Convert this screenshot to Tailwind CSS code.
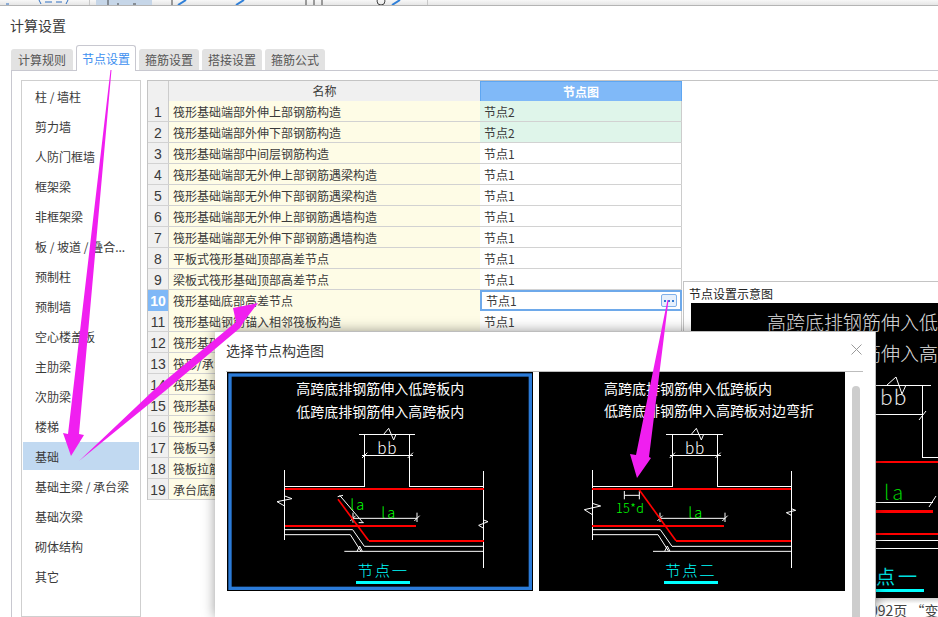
<!DOCTYPE html>
<html lang="zh">
<head>
<meta charset="utf-8">
<script src="https://cdn.jsdelivr.net/npm/@tailwindcss/browser@4"></script>
</head>
<body class="m-0 bg-white">
<div class="relative w-[938px] h-[617px] overflow-hidden bg-white text-[12px] text-[#3a3a3a] font-['Noto_Sans_CJK_SC','Liberation_Sans',sans-serif]">

  <!-- top toolbar remainder -->
  <div class="h-[6px] bg-gradient-to-b from-[#f7f7f7] to-[#e6e6e6] border-b border-[#b4b4b4] overflow-hidden">
    <svg width="938" height="5" viewBox="0 0 938 5" class="block">
      <rect x="96" y="0" width="56" height="5" fill="#c6d6e8"/>
      <path d="M89.5 0V5M427.5 0V5" stroke="#c8c8c8"/>
      <path d="M6 4H9M39 0L41 4M66 4L68 0M45 2H52M56 2H62" stroke="#2f6fc0" fill="none"/>
      <path d="M108 0V5M117 4H119M133 4H136M172 0V5M306 0V5M314 0V5M322 0V5" stroke="#444" fill="none"/>
      <path d="M178 5L186 0M236 5L244 0M392 5L400 0" stroke="#2f7fd8" stroke-width="2" fill="none"/>
      <circle cx="381" cy="1" r="4" fill="none" stroke="#444"/>
    </svg>
  </div>

  <div class="h-[39px] pl-[10px] pt-[9px] text-[14px] leading-[20px]">计算设置</div>

  <!-- tabs -->
  <div class="h-[25px] ml-[11px] flex items-end gap-[3px]">
    <div class="w-[62px] h-[21px] bg-[#e2e2e2] rounded-t-[3px] flex items-center justify-center text-[#555]">计算规则</div>
    <div class="w-[60px] h-[26px] -mb-px bg-white border border-b-0 border-[#c8c8d0] rounded-t-[3px] flex items-center justify-center text-[#3d8ff0] z-10">节点设置</div>
    <div class="w-[60px] h-[21px] bg-[#e2e2e2] rounded-t-[3px] flex items-center justify-center text-[#555]">箍筋设置</div>
    <div class="w-[60px] h-[21px] bg-[#e2e2e2] rounded-t-[3px] flex items-center justify-center text-[#555]">搭接设置</div>
    <div class="w-[60px] h-[21px] bg-[#e2e2e2] rounded-t-[3px] flex items-center justify-center text-[#555]">箍筋公式</div>
  </div>

  <!-- tab content -->
  <div class="ml-[11px] h-[547px] border-l border-t border-[#c8c8d0] pt-[9px] pl-[9px] flex">
    <!-- sidebar -->
    <div class="w-[120px] shrink-0 border border-[#cfcfcf] pt-[1px] px-px">
      <div class="h-[28px] mb-[2px] pt-[2px] flex items-center pl-[12px]">柱 / 墙柱</div>
      <div class="h-[28px] mb-[2px] pt-[2px] flex items-center pl-[12px]">剪力墙</div>
      <div class="h-[28px] mb-[2px] pt-[2px] flex items-center pl-[12px]">人防门框墙</div>
      <div class="h-[28px] mb-[2px] pt-[2px] flex items-center pl-[12px]">框架梁</div>
      <div class="h-[28px] mb-[2px] pt-[2px] flex items-center pl-[12px]">非框架梁</div>
      <div class="h-[28px] mb-[2px] pt-[2px] flex items-center pl-[12px] whitespace-nowrap">板 / 坡道 / 叠合...</div>
      <div class="h-[28px] mb-[2px] pt-[2px] flex items-center pl-[12px]">预制柱</div>
      <div class="h-[28px] mb-[2px] pt-[2px] flex items-center pl-[12px]">预制墙</div>
      <div class="h-[28px] mb-[2px] pt-[2px] flex items-center pl-[12px]">空心楼盖板</div>
      <div class="h-[28px] mb-[2px] pt-[2px] flex items-center pl-[12px]">主肋梁</div>
      <div class="h-[28px] mb-[2px] pt-[2px] flex items-center pl-[12px]">次肋梁</div>
      <div class="h-[28px] mb-[2px] pt-[2px] flex items-center pl-[12px]">楼梯</div>
      <div class="h-[28px] mb-[2px] pt-[2px] flex items-center pl-[12px] bg-[#c1d9f1]">基础</div>
      <div class="h-[28px] mb-[2px] pt-[2px] flex items-center pl-[12px] whitespace-nowrap">基础主梁 / 承台梁</div>
      <div class="h-[28px] mb-[2px] pt-[2px] flex items-center pl-[12px]">基础次梁</div>
      <div class="h-[28px] mb-[2px] pt-[2px] flex items-center pl-[12px]">砌体结构</div>
      <div class="h-[28px] mb-[2px] pt-[2px] flex items-center pl-[12px]">其它</div>
    </div>

    <!-- table -->
    <div class="ml-[6px] w-[535px] shrink-0 border-t border-[#c4c4c4] border-l self-start">
      <div class="grid grid-cols-[21px_311px_202px] h-[20px] leading-[19px] text-center border-b border-[#c0c0c0]">
        <div class="bg-[#f0f0f0] border-r border-[#cccccc]"></div>
        <div class="bg-[#f0f0f0]">名称</div>
        <div class="bg-[#80b9f8] border border-[#5ea6f2] border-b-0 text-white font-bold">节点图</div>
      </div>
      <div class="grid grid-cols-[21px_311px_202px] h-[21px] leading-[18px] border-b border-[#d2d2d2] [&>div]:pt-[2px]"><div class="bg-[#f0f0f0] border-r border-[#cccccc] text-center text-[14px] font-['Liberation_Sans']">1</div><div class="bg-[#fefce6] pl-[4px]">筏形基础端部外伸上部钢筋构造</div><div class="bg-[#dff5ea] border-r border-[#cccccc] pl-[4px]">节点2</div></div>
      <div class="grid grid-cols-[21px_311px_202px] h-[21px] leading-[18px] border-b border-[#d2d2d2] [&>div]:pt-[2px]"><div class="bg-[#f0f0f0] border-r border-[#cccccc] text-center text-[14px] font-['Liberation_Sans']">2</div><div class="bg-[#fefce6] pl-[4px]">筏形基础端部外伸下部钢筋构造</div><div class="bg-[#dff5ea] border-r border-[#cccccc] pl-[4px]">节点2</div></div>
      <div class="grid grid-cols-[21px_311px_202px] h-[21px] leading-[18px] border-b border-[#d2d2d2] [&>div]:pt-[2px]"><div class="bg-[#f0f0f0] border-r border-[#cccccc] text-center text-[14px] font-['Liberation_Sans']">3</div><div class="bg-[#fefce6] pl-[4px]">筏形基础端部中间层钢筋构造</div><div class="border-r border-[#cccccc] pl-[4px]">节点1</div></div>
      <div class="grid grid-cols-[21px_311px_202px] h-[21px] leading-[18px] border-b border-[#d2d2d2] [&>div]:pt-[2px]"><div class="bg-[#f0f0f0] border-r border-[#cccccc] text-center text-[14px] font-['Liberation_Sans']">4</div><div class="bg-[#fefce6] pl-[4px]">筏形基础端部无外伸上部钢筋遇梁构造</div><div class="border-r border-[#cccccc] pl-[4px]">节点1</div></div>
      <div class="grid grid-cols-[21px_311px_202px] h-[21px] leading-[18px] border-b border-[#d2d2d2] [&>div]:pt-[2px]"><div class="bg-[#f0f0f0] border-r border-[#cccccc] text-center text-[14px] font-['Liberation_Sans']">5</div><div class="bg-[#fefce6] pl-[4px]">筏形基础端部无外伸下部钢筋遇梁构造</div><div class="border-r border-[#cccccc] pl-[4px]">节点1</div></div>
      <div class="grid grid-cols-[21px_311px_202px] h-[21px] leading-[18px] border-b border-[#d2d2d2] [&>div]:pt-[2px]"><div class="bg-[#f0f0f0] border-r border-[#cccccc] text-center text-[14px] font-['Liberation_Sans']">6</div><div class="bg-[#fefce6] pl-[4px]">筏形基础端部无外伸上部钢筋遇墙构造</div><div class="border-r border-[#cccccc] pl-[4px]">节点1</div></div>
      <div class="grid grid-cols-[21px_311px_202px] h-[21px] leading-[18px] border-b border-[#d2d2d2] [&>div]:pt-[2px]"><div class="bg-[#f0f0f0] border-r border-[#cccccc] text-center text-[14px] font-['Liberation_Sans']">7</div><div class="bg-[#fefce6] pl-[4px]">筏形基础端部无外伸下部钢筋遇墙构造</div><div class="border-r border-[#cccccc] pl-[4px]">节点1</div></div>
      <div class="grid grid-cols-[21px_311px_202px] h-[21px] leading-[18px] border-b border-[#d2d2d2] [&>div]:pt-[2px]"><div class="bg-[#f0f0f0] border-r border-[#cccccc] text-center text-[14px] font-['Liberation_Sans']">8</div><div class="bg-[#fefce6] pl-[4px]">平板式筏形基础顶部高差节点</div><div class="border-r border-[#cccccc] pl-[4px]">节点1</div></div>
      <div class="grid grid-cols-[21px_311px_202px] h-[21px] leading-[18px] border-b border-[#d2d2d2] [&>div]:pt-[2px]"><div class="bg-[#f0f0f0] border-r border-[#cccccc] text-center text-[14px] font-['Liberation_Sans']">9</div><div class="bg-[#fefce6] pl-[4px]">梁板式筏形基础顶部高差节点</div><div class="border-r border-[#cccccc] pl-[4px]">节点1</div></div>
      <div class="grid grid-cols-[21px_311px_202px] h-[21px] leading-[18px] border-b border-[#d2d2d2] [&>div]:pt-[2px]"><div class="bg-[#7fb8f7] border-r border-[#cccccc] text-center text-[14px] font-bold text-white font-['Liberation_Sans']">10</div><div class="bg-[#fefce6] pl-[4px]">筏形基础底部高差节点</div><div class="h-[21px] border-2 border-[#6ea9ea] pl-[4px] pt-0! leading-[17px] flex items-center justify-between pr-[3px]"><span>节点1</span><span class="w-[16px] h-[13px] rounded-[2px] border border-[#7fb0ea] bg-[#e6f0fc] flex items-center justify-center gap-[2px]"><i class="w-[2px] h-[2px] bg-[#2f78d0]"></i><i class="w-[2px] h-[2px] bg-[#2f78d0]"></i><i class="w-[2px] h-[2px] bg-[#2f78d0]"></i></span></div></div>
      <div class="grid grid-cols-[21px_311px_202px] h-[21px] leading-[18px] border-b border-[#d2d2d2] [&>div]:pt-[2px]"><div class="bg-[#f0f0f0] border-r border-[#cccccc] text-center text-[14px] font-['Liberation_Sans']">11</div><div class="bg-[#fefce6] pl-[4px]">筏形基础钢筋锚入相邻筏板构造</div><div class="border-r border-[#cccccc] pl-[4px]">节点1</div></div>
      <div class="grid grid-cols-[21px_311px_202px] h-[21px] leading-[18px] border-b border-[#d2d2d2] [&>div]:pt-[2px]"><div class="bg-[#f0f0f0] border-r border-[#cccccc] text-center text-[14px] font-['Liberation_Sans']">12</div><div class="bg-[#fefce6] pl-[4px]">筏形基础构造</div><div class="border-r border-[#cccccc] pl-[4px]">节点1</div></div>
      <div class="grid grid-cols-[21px_311px_202px] h-[21px] leading-[18px] border-b border-[#d2d2d2] [&>div]:pt-[2px]"><div class="bg-[#f0f0f0] border-r border-[#cccccc] text-center text-[14px] font-['Liberation_Sans']">13</div><div class="bg-[#fefce6] pl-[4px]">筏形/承台构造</div><div class="border-r border-[#cccccc] pl-[4px]">节点1</div></div>
      <div class="grid grid-cols-[21px_311px_202px] h-[21px] leading-[18px] border-b border-[#d2d2d2] [&>div]:pt-[2px]"><div class="bg-[#f0f0f0] border-r border-[#cccccc] text-center text-[14px] font-['Liberation_Sans']">14</div><div class="bg-[#fefce6] pl-[4px]">筏形基础构造</div><div class="border-r border-[#cccccc] pl-[4px]">节点1</div></div>
      <div class="grid grid-cols-[21px_311px_202px] h-[21px] leading-[18px] border-b border-[#d2d2d2] [&>div]:pt-[2px]"><div class="bg-[#f0f0f0] border-r border-[#cccccc] text-center text-[14px] font-['Liberation_Sans']">15</div><div class="bg-[#fefce6] pl-[4px]">筏形基础构造</div><div class="border-r border-[#cccccc] pl-[4px]">节点1</div></div>
      <div class="grid grid-cols-[21px_311px_202px] h-[21px] leading-[18px] border-b border-[#d2d2d2] [&>div]:pt-[2px]"><div class="bg-[#f0f0f0] border-r border-[#cccccc] text-center text-[14px] font-['Liberation_Sans']">16</div><div class="bg-[#fefce6] pl-[4px]">筏形基础构造</div><div class="border-r border-[#cccccc] pl-[4px]">节点1</div></div>
      <div class="grid grid-cols-[21px_311px_202px] h-[21px] leading-[18px] border-b border-[#d2d2d2] [&>div]:pt-[2px]"><div class="bg-[#f0f0f0] border-r border-[#cccccc] text-center text-[14px] font-['Liberation_Sans']">17</div><div class="bg-[#fefce6] pl-[4px]">筏板马凳筋</div><div class="border-r border-[#cccccc] pl-[4px]">节点1</div></div>
      <div class="grid grid-cols-[21px_311px_202px] h-[21px] leading-[18px] border-b border-[#d2d2d2] [&>div]:pt-[2px]"><div class="bg-[#f0f0f0] border-r border-[#cccccc] text-center text-[14px] font-['Liberation_Sans']">18</div><div class="bg-[#fefce6] pl-[4px]">筏板拉筋</div><div class="border-r border-[#cccccc] pl-[4px]">节点1</div></div>
      <div class="grid grid-cols-[21px_311px_202px] h-[21px] leading-[18px] border-b border-[#d2d2d2] [&>div]:pt-[2px]"><div class="bg-[#f0f0f0] border-r border-[#cccccc] text-center text-[14px] font-['Liberation_Sans']">19</div><div class="bg-[#fefce6] pl-[4px]">承台底筋</div><div class="border-r border-[#cccccc] pl-[4px]">节点1</div></div>
    </div>

    <!-- right side: preview panel -->
    <div class="flex-1 min-w-0 border-t border-[#c4c4c4] pt-[200px] pl-px">
      <div class="h-[400px] border-l border-t border-[#c4c4c4]">
        <div class="h-[21px] pl-[5px] leading-[24px] text-[#222]">节点设置示意图</div>
        <div class="ml-[7px] h-[295px] bg-black">
          <svg width="247" height="295" viewBox="691 303 247 295" class="block" font-family="'Noto Sans CJK SC',sans-serif">
            <text x="767" y="330" font-size="19" fill="#e4e4e4" font-weight="300">高跨底排钢筋伸入低</text>
            <text x="767" y="361" font-size="19" fill="#e4e4e4" font-weight="300">低跨底排钢筋伸入高</text>
            <g shape-rendering="crispEdges" fill="none" stroke="#fff">
              <path d="M870 385.5H931M922.5 385.5V457.5H938M870 414.5H922.5M870 502.5H933M870 540.5H938M870 548.5H938"/>
            </g>
            <path d="M887 385L896 377L902 394L906 385M919 420L926 411M929 507L936 496" fill="none" stroke="#fff"/>
            <text x="880" y="405" font-size="21" letter-spacing="1" fill="#e8e8e8" font-weight="300">bb</text>
            <text x="884" y="500" font-size="20" letter-spacing="3" fill="#0c0" font-weight="300">la</text>
            <path d="M870 462H938M870 511.5H933M870 534H938" stroke="#f00" stroke-width="2.5" shape-rendering="crispEdges"/>
            <text x="876" y="584" font-size="19" letter-spacing="3" fill="#00e0e0">点一</text>
            <path d="M870 590.5H924" stroke="#0ff" stroke-width="3" shape-rendering="crispEdges"/>
          </svg>
        </div>
        <div class="h-[19px] pl-[186px] pt-[3px] text-[14px] leading-[18px] text-[#444] whitespace-nowrap bg-gradient-to-b from-[#cfcfcf] to-white to-[30%]">092页 “变截面</div>
      </div>
    </div>
  </div>

  <!-- modal dialog -->
  <div class="absolute left-[215px] top-[331px] w-[661px] h-[286px] bg-white border-t border-r border-[#bdbdbd] shadow-[0_0_12px_rgba(0,0,0,0.4)] z-20">
    <div class="h-[39px] pl-[11px] pt-[8px] text-[14px] leading-[20px] flex justify-between">
      <span>选择节点构造图</span>
      <svg class="mr-[13px] mt-[4px]" width="11" height="11" viewBox="0 0 11 11"><path d="M0.5 0.5L10.5 10.5M10.5 0.5L0.5 10.5" stroke="#9a9a9a" stroke-width="1" fill="none"/></svg>
    </div>
    <div class="ml-[11px] w-[637px] h-px bg-[#bdbdbd]"></div>
    <div class="pl-[12px] flex gap-[6px]">
      <!-- node 1 -->
      <svg width="306" height="219" viewBox="20 18 918 657" class="block bg-black shrink-0" font-family="'Noto Sans CJK SC',sans-serif">
        <rect x="29" y="27" width="901" height="640" fill="none" stroke="#2b7bd8" stroke-width="10"/>
        <text x="228" y="85" font-size="42" fill="#fff">高跨底排钢筋伸入低跨板内</text>
        <text x="228" y="152" font-size="42" fill="#fff">低跨底排钢筋伸入高跨板内</text>
        <g fill="none" stroke="#fff" stroke-width="3">
          <path d="M415 205H585M433 205V361H193M568 205V361H790M193 312V522M790 315V605M425 268H578" shape-rendering="crispEdges"/>
          <path d="M193 491H397L432 541H790M193 506H390L422 556M372 556H790"/>
          <path d="M490 205L505 187L520 222L527 205M425 276L441 260M562 276L578 260"/>
          <path d="M193 390L215 398L170 407L193 420M790 462L803 467L775 478L790 487"/>
          <path d="M410 556L418 540L426 556"/>
          <path d="M358 388L428 470M352 392L368 388M398 440V470M398 457H590M390 465L406 449M582 465L598 449M590 440V468M415 470H430"/>
        </g>
        <path d="M193 368H790M193 480H588M445 524H790" stroke="#f00" stroke-width="6" shape-rendering="crispEdges"/>
        <path d="M353 400L445 524" stroke="#f00" stroke-width="5" fill="none"/>
        <text x="390" y="432" font-size="44" letter-spacing="6" fill="#0f0" font-weight="300">la</text>
        <text x="483" y="457" font-size="44" letter-spacing="6" fill="#0f0" font-weight="300">la</text>
        <text x="471" y="265" font-size="46" letter-spacing="2" fill="#fff" font-weight="300">bb</text>
        <text x="412" y="630" font-size="46" letter-spacing="5" fill="#0ff" font-weight="300">节点一</text>
        <path d="M408 649H570" stroke="#0ff" stroke-width="9" shape-rendering="crispEdges"/>
      </svg>
      <!-- node 2 -->
      <svg width="306" height="219" viewBox="27 18 918 657" class="block bg-black shrink-0" font-family="'Noto Sans CJK SC',sans-serif">
        <text x="222" y="85" font-size="42" fill="#fff">高跨底排钢筋伸入低跨板内</text>
        <text x="222" y="149" font-size="42" fill="#fff">低跨底排钢筋伸入高跨板对边弯折</text>
        <g fill="none" stroke="#fff" stroke-width="3">
          <path d="M409 205H579M428 205V361H187M562 205V361H784M187 312V522M784 315V605M419 268H572" shape-rendering="crispEdges"/>
          <path d="M187 491H391L426 541H784M187 506H384L416 556M369 556H784"/>
          <path d="M484 205L499 187L514 222L521 205M419 276L435 260M556 276L572 260"/>
          <path d="M187 412L212 420L163 431L187 446M784 428L797 433L769 440L784 448"/>
          <path d="M404 556L412 540L420 556"/>
          <path d="M283 388H328M283 375V400M328 375V400M390 457H585M382 465L398 449M577 465L593 449M390 440V468M585 440V468"/>
        </g>
        <path d="M187 368H784M187 480H582M438 524H784" stroke="#f00" stroke-width="6" shape-rendering="crispEdges"/>
        <path d="M328 372L438 524" stroke="#f00" stroke-width="5" fill="none"/>
        <text x="258" y="440" font-size="38" letter-spacing="1" fill="#0f0" font-weight="300">15*d</text>
        <text x="475" y="457" font-size="44" letter-spacing="6" fill="#0f0" font-weight="300">la</text>
        <text x="465" y="265" font-size="46" letter-spacing="2" fill="#fff" font-weight="300">bb</text>
        <text x="406" y="630" font-size="46" letter-spacing="5" fill="#0ff" font-weight="300">节点二</text>
        <path d="M402 649H564" stroke="#0ff" stroke-width="9" shape-rendering="crispEdges"/>
      </svg>
    </div>
    <!-- scrollbar -->
    <div class="absolute left-[637px] top-[54px] bottom-0 w-[8px] rounded-t-[4px] bg-[#cdcdcd]"></div>
  </div>

  <!-- annotation arrows -->
  <svg class="absolute inset-0 z-30 pointer-events-none" width="938" height="617" viewBox="0 0 938 617">
    <g fill="#f01ff0">
      <polygon points="110.5,70 111.5,70 79,434 84,435 71,456 63,433 68,434"/>
      <polygon points="79,461 155,389 236,322 233,308 258,303 245,320 240,328 165,391"/>
      <polygon points="667.5,300 668.5,300 649,457 651,458 637,478 630,454 636,455"/>
    </g>
  </svg>
</div>
</body>
</html>
